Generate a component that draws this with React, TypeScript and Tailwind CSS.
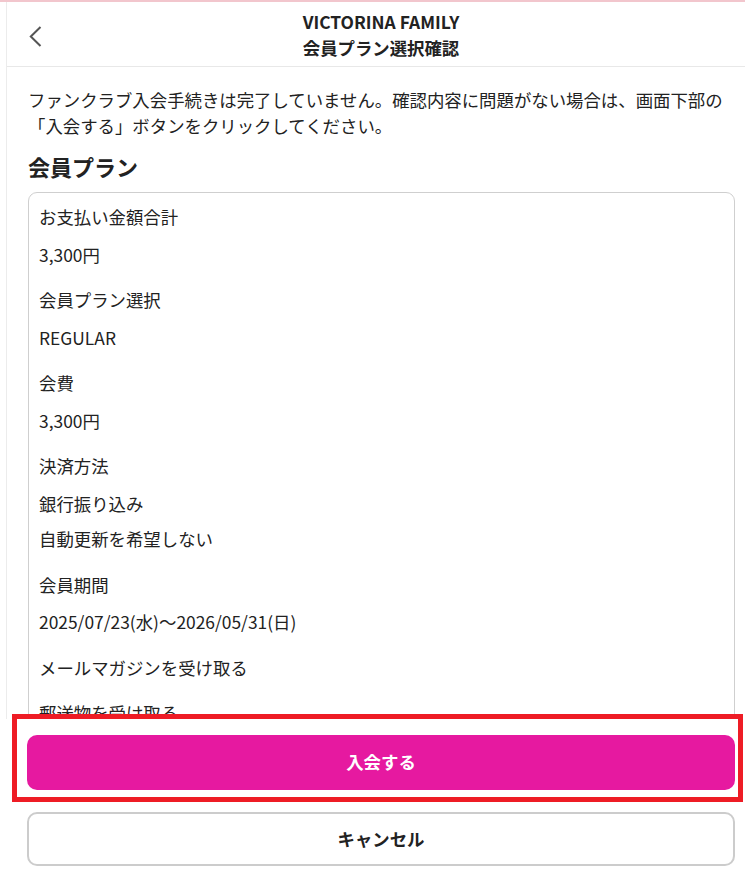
const items: { label: string; values: string[] }[] = [
  { label: "お支払い金額合計", values: ["3,300円"] },
  { label: "会員プラン選択", values: ["REGULAR"] },
  { label: "会費", values: ["3,300円"] },
  { label: "決済方法", values: ["銀行振り込み", "自動更新を希望しない"] },
  { label: "会員期間", values: ["2025/07/23(水)～2026/05/31(日)"] },
  { label: "メールマガジンを受け取る", values: [] },
  { label: "郵送物を受け取る", values: [] },
];

const App = () => {
  return (
    <div className="h-[876px] w-full flex flex-col overflow-hidden bg-white text-[#222] font-['Noto_Sans_CJK_JP',sans-serif]">
      <div className="h-[2px] w-[745px] bg-[#f2c6cd] shrink-0" />

      <div className="flex-1 min-h-0 overflow-hidden ml-[6px] w-[739px] border-l border-[#ececec]">
        {/* Header */}
        <div className="h-[65px] border-b border-[#e8e8e8] flex items-center relative pl-[10px]">
          <button className="absolute left-[20px] top-[23px] w-[16px] h-[22px] flex items-center justify-center">
            <svg width="13" height="21" viewBox="0 0 13 21" fill="none">
              <polyline points="11.5,1 1.8,10.5 11.5,20" stroke="#555" strokeWidth="2" />
            </svg>
          </button>
          <div className="flex-1 text-center font-bold text-[17.4px] leading-[26px] pt-[2px]">
            <div>VICTORINA FAMILY</div>
            <div>会員プラン選択確認</div>
          </div>
        </div>

        {/* Content */}
        <div className="pl-[21px] pr-[10px] pt-[20px]">
          <p className="text-[17.4px] leading-[26px]">
            ファンクラブ入会手続きは完了していません。確認内容に問題がない場合は、画面下部の「入会する」ボタンをクリックしてください。
          </p>
          <h2 className="mt-[12px] mb-[11px] text-[22px] leading-[30px] font-bold">会員プラン</h2>

          <div className="border border-[#cfcfcf] rounded-[9px] pl-[10px] pr-[10px] pt-[11px] pb-[16px] flex flex-col gap-[19.5px] text-[17.4px] leading-[26px]">
            {items.map((item) => (
              <div key={item.label} className="flex flex-col gap-[9.5px]">
                <div className={item.values.length ? "mb-[2px]" : ""}>{item.label}</div>
                {item.values.map((v) => (
                  <div key={v}>{v}</div>
                ))}
              </div>
            ))}
          </div>
        </div>
      </div>

      {/* Bottom actions */}
      <div className="h-[157px] shrink-0 bg-white">
        <div className="relative -mt-[5px] ml-[12px] w-[731px] h-[88px] border-[5px] border-[#ee1c25] pl-[10px] pr-[3px] pt-[16px]">
          <button className="w-full h-[55px] rounded-[10px] bg-[#e619a0] text-white font-bold text-[17.4px]">
            入会する
          </button>
        </div>
        <div className="mt-[10px] ml-[27px] w-[708px]">
          <button className="w-full h-[54px] rounded-[10px] border-2 border-[#cccccc] bg-white text-[#222] font-bold text-[17.4px]">
            キャンセル
          </button>
        </div>
      </div>
    </div>
  );
};

export default App;
